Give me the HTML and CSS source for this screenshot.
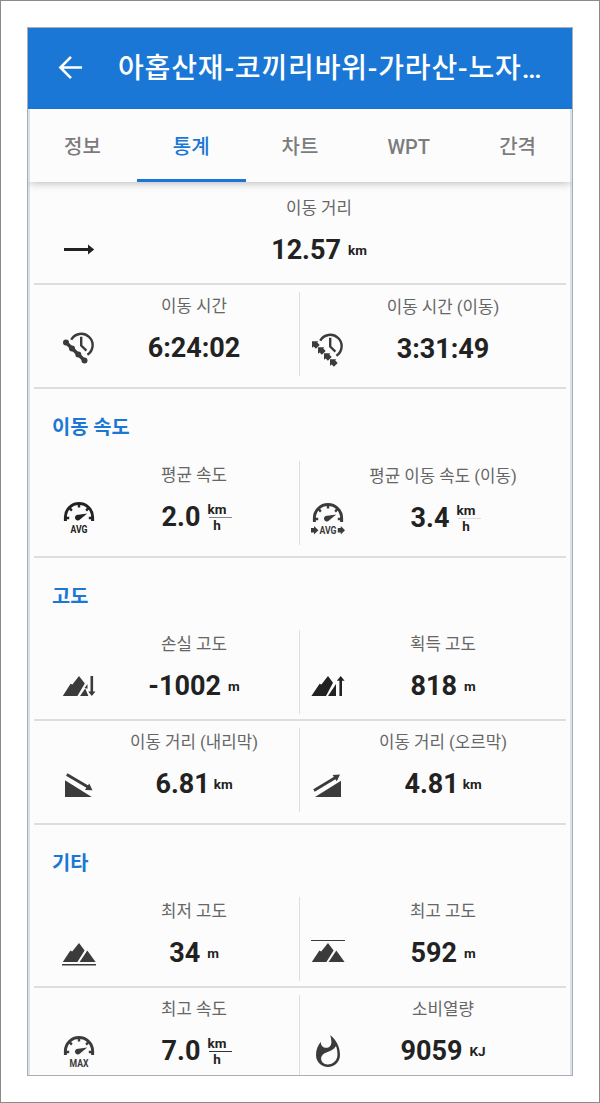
FILE: index.html
```html
<!DOCTYPE html>
<html lang="ko">
<head>
    <meta charset="UTF-8">
    <meta name="viewport" content="width=device-width, initial-scale=1.0">
    <title>통계</title>
    <link rel="stylesheet" href="styles.css">
</head>
<body>

<!-- shared icon shapes -->
<svg class="defs" width="0" height="0">
    <symbol id="gauge" viewBox="0 0 34 34">
        <path d="M3.4 20V16a13.6 13.4 0 0 1 27.2 0V20" fill="none" stroke="currentColor" stroke-width="3"/>
        <path d="M4 17h3.2M30 17h-3.2M17 3v3.6M7.5 7.2l2.4 2.4M26.5 7.2l-2.4 2.4" stroke="currentColor" stroke-width="2.4"/>
        <path d="M25.2 12.4L18 18.6a2.9 2.9 0 1 1-1.6-4.8z" fill="currentColor"/>
    </symbol>
    <symbol id="mountains" viewBox="0 0 34 34">
        <path d="M.8 25L8.4 13.6l1.8.8L17 6l5.6 7.4L15.4 25z" fill="currentColor"/>
        <path d="M17.6 25L25.3 13.4L33.6 25z" fill="currentColor"/>
    </symbol>
    <symbol id="clock" viewBox="0 0 34 34">
        <path d="M9.2 7.8A11.4 11.4 0 1 1 25.4 22.8" fill="none" stroke="currentColor" stroke-width="2.4"/>
        <path d="M19.2 4.8v8.8l5.2 5" fill="none" stroke="currentColor" stroke-width="2.4"/>
    </symbol>
</svg>

<div class="phone">
    <div class="appbar">
        <svg class="back" viewBox="0 0 26 26"><path d="M25 13H3M13.5 2L2.5 13l11 11" fill="none" stroke="currentColor" stroke-width="2.7"/></svg>
        <h1>아홉산재-코끼리바위-가라산-노자…</h1>
    </div>

    <div class="tabs">
        <div class="tab">정보</div>
        <div class="tab active">통계</div>
        <div class="tab">차트</div>
        <div class="tab">WPT</div>
        <div class="tab">간격</div>
    </div>

    <div class="content">
        <div class="row first">
            <div class="cell">
                <svg class="icon dark" viewBox="0 0 34 34"><path d="M2 15h24v-3.6l6.2 5-6.2 5V18H2z" fill="currentColor"/></svg>
                <div class="stat"><div class="label">이동 거리</div><div class="value">12.57 <span class="unit">km</span></div></div>
            </div>
        </div>

        <div class="row last">
            <div class="cell">
                <svg class="icon" viewBox="0 0 34 34">
                    <use href="#clock"/>
                    <path d="M4 10.5l18.5 18" stroke="currentColor" stroke-width="3.6"/>
                    <g fill="currentColor"><circle cx="4" cy="10.5" r="3"/><circle cx="10" cy="16.5" r="3"/><circle cx="16.3" cy="22.5" r="3"/><circle cx="22.5" cy="28.5" r="3"/></g>
                </svg>
                <div class="stat"><div class="label">이동 시간</div><div class="value">6:24:02</div></div>
            </div>
            <div class="cell low">
                <svg class="icon" viewBox="0 0 34 34">
                    <use href="#clock"/>
                    <g fill="currentColor">
                        <path id="chip" d="M1 8.200h6.200L6.300 9.600l2.400 2.400-3.800 3.800-2.200-2.200L1 14.800z"/>
                        <use href="#chip" x="6" y="6"/><use href="#chip" x="12" y="12"/><use href="#chip" x="18" y="18"/>
                    </g>
                </svg>
                <div class="stat"><div class="label">이동 시간 (이동)</div><div class="value">3:31:49</div></div>
            </div>
        </div>

        <h2>이동 속도</h2>
        <div class="row last">
            <div class="cell">
                <svg class="icon dark" viewBox="0 0 34 34"><use href="#gauge"/><text x="8.5" y="32" textLength="17" lengthAdjust="spacingAndGlyphs">AVG</text></svg>
                <div class="stat"><div class="label">평균 속도</div><div class="value">2.0 <span class="unit frac mid"><span>km</span><span>h</span></span></div></div>
            </div>
            <div class="cell low">
                <svg class="icon" viewBox="0 0 34 34">
                    <use href="#gauge"/>
                    <text x="8.5" y="32" textLength="17" lengthAdjust="spacingAndGlyphs">AVG</text>
                    <path d="M0 26h3v-2l4.400 4.200-4.400 4.200v-2H0zM26.800 26h3v-2l4.200 4.200-4.200 4.200v-2h-3z" fill="currentColor"/>
                </svg>
                <div class="stat"><div class="label">평균 이동 속도 (이동)</div><div class="value">3.4 <span class="unit frac pale"><span>km</span><span>h</span></span></div></div>
            </div>
        </div>

        <h2>고도</h2>
        <div class="row">
            <div class="cell">
                <svg class="icon" viewBox="0 0 34 34"><path d="M.8 26L8.600 13.800l1.800.8L17 6l5.800 7.400L15.400 26zM18 26l5.200-7.500L26.400 26zM22.500 18l3-4v4.800zM28.500 6h2.600v15.500h2.400L29.800 26l-3.600-4.500h2.300z" fill="currentColor"/></svg>
                <div class="stat"><div class="label">손실 고도</div><div class="value">-1002 <span class="unit">m</span></div></div>
            </div>
            <div class="cell">
                <svg class="icon dark" viewBox="0 0 34 34"><path d="M.4 26L8.600 13.800l1.800.8L17 6l5 6.800L15 26zM17 26l8-12v12zM28.400 26V10.800h-2.600L29.700 6l3.900 4.800H31V26z" fill="currentColor"/></svg>
                <div class="stat"><div class="label">획득 고도</div><div class="value">818 <span class="unit">m</span></div></div>
            </div>
        </div>
        <div class="row last">
            <div class="cell">
                <svg class="icon" viewBox="0 0 34 34"><path d="M3 12.300L29.800 29H3z" fill="currentColor"/><path d="M4.800 6.500L26 19" stroke="currentColor" stroke-width="2.800"/><path d="M30.500 22.300l-7.500-.3 4.200-6.500z" fill="currentColor"/></svg>
                <div class="stat"><div class="label">이동 거리 (내리막)</div><div class="value tight">6.81 <span class="unit">km</span></div></div>
            </div>
            <div class="cell">
                <svg class="icon" viewBox="0 0 34 34"><path d="M30 12.800V29H4z" fill="currentColor"/><path d="M3 22.500L25 9.200" stroke="currentColor" stroke-width="2.800"/><path d="M29 6.500l-3.200 6.700-4.200-6.300z" fill="currentColor"/></svg>
                <div class="stat"><div class="label">이동 거리 (오르막)</div><div class="value tight">4.81 <span class="unit">km</span></div></div>
            </div>
        </div>

        <h2>기타</h2>
        <div class="row">
            <div class="cell">
                <svg class="icon" viewBox="0 0 34 34"><use href="#mountains"/><path d="M0 27.700h34" stroke="currentColor" stroke-width="1.400"/></svg>
                <div class="stat"><div class="label">최저 고도</div><div class="value">34 <span class="unit">m</span></div></div>
            </div>
            <div class="cell">
                <svg class="icon" viewBox="0 0 34 34"><use href="#mountains"/><path d="M0 3.500h34" stroke="currentColor" stroke-width="1.200"/></svg>
                <div class="stat"><div class="label">최고 고도</div><div class="value">592 <span class="unit">m</span></div></div>
            </div>
        </div>
        <div class="row end">
            <div class="cell">
                <svg class="icon" viewBox="0 0 34 34"><use href="#gauge"/><text x="7.500" y="32" textLength="19" lengthAdjust="spacingAndGlyphs">MAX</text></svg>
                <div class="stat"><div class="label">최고 속도</div><div class="value">7.0 <span class="unit frac"><span>km</span><span>h</span></span></div></div>
            </div>
            <div class="cell">
                <svg class="icon" viewBox="0 0 34 34"><path transform="translate(-1 -1) scale(1.5)" fill-rule="evenodd" d="M13.5.67s.74 2.65.74 4.8c0 2.060-1.350 3.730-3.410 3.730-2.070 0-3.630-1.670-3.630-3.730l.03-.36C5.210 7.510 4 10.620 4 14c0 4.420 3.580 8 8 8s8-3.580 8-8C20 8.610 17.410 3.800 13.500.67zM11.700 20.300c-2.600 0-4.300-1.700-4.300-3.900 0-2.200 1.500-3.600 3.900-4.300 2.200-.7 4.600-1.600 6-4.100.7 1.800 1 3.900 1 5.700 0 3.800-2.700 6.600-6.600 6.600z" fill="currentColor"/></svg>
                <div class="stat"><div class="label">소비열량</div><div class="value">9059 <span class="unit">KJ</span></div></div>
            </div>
        </div>
    </div>
</div>

</body>
</html>
```
FILE: styles.css
```css
* {
    box-sizing: border-box;
}

body {
    margin: 0;
    height: 1103px;
    padding: 26px;
    border: 1px solid #8c8989;
    background: #fff;
    font-family: Roboto, 'Noto Sans CJK KR', sans-serif;
    color: #222;
    overflow: hidden;
}

.defs {
    display: block;
}

.phone {
    width: 546px;
    height: 1049px;
    border: 1px solid #a9adb8;
    background: #fcfcfc;
    overflow: hidden;
}

.appbar {
    height: 81px;
    display: flex;
    align-items: center;
    padding-left: 30px;
    background: #1b77d5;
    color: #fff;
}

.back {
    width: 25px;
    height: 25px;
    margin-top: -3px;
}

h1 {
    margin: 0 0 0 35px;
    font-size: 28px;
    font-weight: 500;
    letter-spacing: 0.85px;
    line-height: 80px;
    white-space: nowrap;
}

.tabs {
    height: 73px;
    display: flex;
    position: relative;
    background: #fcfcfc;
    box-shadow: inset 2px 0 #dbe1eb, inset -2px 0 #dbe1eb, 0 3px 8px -2px rgba(0, 0, 0, 0.28);
}

.tab {
    flex: 1;
    text-align: center;
    font-size: 20px;
    font-weight: 500;
    line-height: 76px;
    color: #7c7c7c;
}

.tab.active {
    color: #1b77d5;
    border-bottom: 3px solid #1b77d5;
}

.content {
    height: 893px;
    padding: 0 4px;
    border-left: 2px solid #dbe1eb;
    border-right: 2px solid #dbe1eb;
}

.row {
    display: flex;
    box-sizing: content-box;
    height: 84px;
    padding: 7px 0 5px;
    border-bottom: 2px solid #dedede;
}

.row.first {
    padding-top: 12px;
}

.row.last {
    padding-bottom: 11px;
}

.row.end {
    border-bottom: none;
}

.cell {
    flex: 0 0 266px;
    display: flex;
    padding: 0 8px 0 28px;
}

.cell + .cell {
    flex-basis: 267px;
    margin-left: -1px;
    padding: 0 25px 0 11px;
    border-left: 1px solid #dedede;
}

.first .cell {
    flex: 1;
    padding-right: 24px;
}

.low .icon,
.low .stat {
    position: relative;
    top: 1px;
}

.icon {
    flex: none;
    width: 34px;
    height: 34px;
    margin-top: 40px;
    color: #3b3b3b;
    overflow: visible;
}

.first .icon {
    margin-top: 39px;
}

.icon.dark {
    color: #222;
}

.icon text {
    font-size: 11px;
    font-weight: 700;
    fill: currentColor;
}

.stat {
    flex: 1;
    text-align: center;
    white-space: nowrap;
}

.label {
    height: 28px;
    line-height: 28px;
    font-size: 16.8px;
    color: #666;
}

.value {
    display: flex;
    justify-content: center;
    align-items: center;
    gap: 7px;
    height: 56px;
    font-size: 27px;
    font-weight: 700;
}

.value.tight {
    gap: 4px;
}

.unit {
    font-size: 13.5px;
    font-weight: 700;
}

.frac {
    display: flex;
    flex-direction: column;
    align-items: center;
    width: 19px;
    line-height: 15px;
}

.frac span:first-child::after {
    content: '';
    display: block;
    height: 1px;
    margin: 0 -6px 0 2px;
    background: #333;
}

.frac.mid span:first-child::after {
    background: #888;
}

.frac.pale span:first-child::after {
    background: #ddd;
}

h2 {
    margin: 0;
    height: 65px;
    padding: 0 18px;
    font-size: 19.8px;
    font-weight: 700;
    line-height: 78px;
    color: #1b77d5;
}
```
